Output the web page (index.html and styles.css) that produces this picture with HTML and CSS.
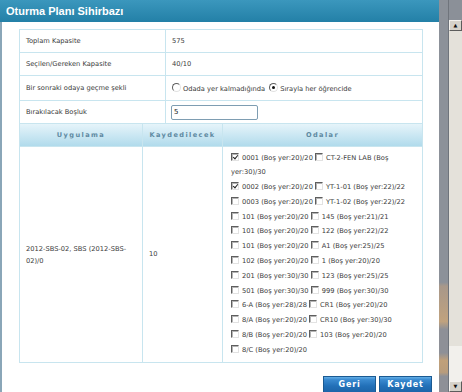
FILE: index.html
```html
<!DOCTYPE html>
<html lang="tr">
<head>
    <meta charset="UTF-8">
    <title>Oturma Planı Sihirbazı</title>
    <link rel="stylesheet" href="styles.css">
</head>
<body>
    <div class="screen">
        <div class="dialog">
            <div class="titlebar">Oturma Planı Sihirbazı</div>
            <div class="dialog-body">
                <table class="summary">
                    <colgroup><col class="label-col"><col></colgroup>
                    <tr class="row-23">
                        <td class="label">Toplam Kapasite</td>
                        <td class="value">575</td>
                    </tr>
                    <tr class="row-23">
                        <td class="label">Seçilen/Gereken Kapasite</td>
                        <td class="value">40/10</td>
                    </tr>
                    <tr class="row-25">
                        <td class="label">Bir sonraki odaya geçme şekli</td>
                        <td class="value">
                            <span class="radio"></span>Odada yer kalmadığında
                            <span class="radio checked"></span>Sırayla her öğrencide
                        </td>
                    </tr>
                    <tr class="row-23">
                        <td class="label">Bırakılacak Boşluk</td>
                        <td class="value"><input class="gap-input" type="text" value="5"></td>
                    </tr>
                </table>

                <table class="rooms">
                    <colgroup><col class="app-col"><col class="count-col"><col></colgroup>
                    <tr class="head">
                        <th>Uygulama</th>
                        <th>Kaydedilecek</th>
                        <th>Odalar</th>
                    </tr>
                    <tr>
                        <td class="app">2012-SBS-02, SBS (2012-SBS-<br>02)/0</td>
                        <td class="count">10</td>
                        <td class="room-list">
                            <span class="cb checked"></span>0001 (Boş yer:20)/20 <span class="cb"></span>CT-2-FEN LAB (Boş<br>yer:30)/30<br>
                            <span class="cb checked"></span>0002 (Boş yer:20)/20 <span class="cb"></span>YT-1-01 (Boş yer:22)/22<br>
                            <span class="cb"></span>0003 (Boş yer:20)/20 <span class="cb"></span>YT-1-02 (Boş yer:22)/22<br>
                            <span class="cb"></span>101 (Boş yer:20)/20 <span class="cb"></span>145 (Boş yer:21)/21<br>
                            <span class="cb"></span>101 (Boş yer:20)/20 <span class="cb"></span>122 (Boş yer:22)/22<br>
                            <span class="cb"></span>101 (Boş yer:20)/20 <span class="cb"></span>A1 (Boş yer:25)/25<br>
                            <span class="cb"></span>102 (Boş yer:20)/20 <span class="cb"></span>1 (Boş yer:20)/20<br>
                            <span class="cb"></span>201 (Boş yer:30)/30 <span class="cb"></span>123 (Boş yer:25)/25<br>
                            <span class="cb"></span>501 (Boş yer:30)/30 <span class="cb"></span>999 (Boş yer:30)/30<br>
                            <span class="cb"></span>6-A (Boş yer:28)/28 <span class="cb"></span>CR1 (Boş yer:20)/20<br>
                            <span class="cb"></span>8/A (Boş yer:20)/20 <span class="cb"></span>CR10 (Boş yer:30)/30<br>
                            <span class="cb"></span>8/B (Boş yer:20)/20 <span class="cb"></span>103 (Boş yer:20)/20<br>
                            <span class="cb"></span>8/C (Boş yer:20)/20
                        </td>
                    </tr>
                </table>

                <div class="actions">
                    <button class="btn">Geri</button>
                    <button class="btn">Kaydet</button>
                </div>
            </div>
        </div>
        <div class="strip"></div>
        <div class="scrollbar">
            <div class="sb-top"></div>
            <div class="sb-btn">&#9650;</div>
            <div class="sb-track"></div>
            <div class="sb-btn">&#9660;</div>
        </div>
    </div>
</body>
</html>
```
FILE: styles.css
```css
* {
    margin: 0;
    padding: 0;
    box-sizing: border-box;
}

body {
    font-family: 'DejaVu Sans', Verdana, sans-serif;
    font-size: 6.7px;
    color: #3a3a3a;
    background: #8b9098;
    height: 392px;
    overflow: hidden;
}

.screen {
    display: flex;
    height: 392px;
}

.dialog {
    width: 439px;
    display: flex;
    flex-direction: column;
    background: white;
}

.titlebar {
    height: 22px;
    line-height: 23px;
    padding-left: 6px;
    background: linear-gradient(#3b97bd, #2380a7);
    color: white;
    font-family: 'Liberation Sans', Arial, sans-serif;
    font-weight: bold;
    font-size: 11px;
}

.dialog-body {
    flex: 1;
    border-left: 2px solid #8aa6b8;
    padding: 7px 16px 0 17px;
}

table {
    width: 404px;
    border-collapse: collapse;
    table-layout: fixed;
}

td, th {
    border: 1px solid #c8e5ef;
}

.label-col {
    width: 146px;
}

.row-23 {
    height: 23px;
}

.row-25 {
    height: 25px;
}

.label {
    padding-left: 6px;
}

.value {
    padding-left: 6px;
}

.radio {
    display: inline-block;
    width: 9px;
    height: 9px;
    border-radius: 50%;
    border: 1px solid;
    border-color: #5e5e5e #e2e2e2 #e2e2e2 #5e5e5e;
    background: white;
    vertical-align: -1px;
    margin: 0 2px 0 0;
    position: relative;
}

.radio + .radio,
.radio.checked {
    margin-left: 2px;
}

.radio.checked::after {
    content: '';
    position: absolute;
    left: 2px;
    top: 2px;
    width: 3px;
    height: 3px;
    border-radius: 50%;
    background: #111;
}

.gap-input {
    width: 87px;
    height: 15px;
    margin-left: -1px;
    border: 1px solid #7e9db2;
    border-radius: 2px;
    padding-left: 2px;
    font-family: 'DejaVu Sans', Verdana, sans-serif;
    font-size: 7px;
    color: #222;
    vertical-align: middle;
}

.rooms tr:first-child th {
    border-top: none;
}

.app-col {
    width: 123px;
}

.count-col {
    width: 80px;
}

.head {
    height: 22px;
    background: linear-gradient(#e6f4fa, #b1dbec);
}

.head th {
    font-weight: bold;
    font-size: 6.6px;
    letter-spacing: 1.4px;
    color: #5f8aa2;
    text-align: center;
}

.app {
    padding: 2px 6px 0 6px;
    line-height: 12px;
}

.count {
    padding-left: 6px;
}

.room-list {
    padding: 4px 4px 4px 8px;
    line-height: 14.8px;
    vertical-align: top;
}

.cb {
    display: inline-block;
    width: 8px;
    height: 8px;
    border: 1px solid;
    border-color: #5e5e5e #e2e2e2 #e2e2e2 #5e5e5e;
    box-shadow: inset 1px 1px #b4b4b4;
    background: white;
    vertical-align: -1px;
    margin-right: 3px;
    position: relative;
}

.cb.checked::after {
    content: '';
    position: absolute;
    left: 1.5px;
    top: 0px;
    width: 2px;
    height: 4px;
    border: solid #222;
    border-width: 0 1.3px 1.3px 0;
    transform: rotate(40deg);
}

.actions {
    display: flex;
    justify-content: flex-end;
    gap: 3px;
    margin-top: 13px;
    margin-right: -9px;
}

.btn {
    width: 53px;
    height: 20px;
    border: 1px solid #1b5a92;
    background: linear-gradient(#63aee6 0, #3a8ad0 15%, #2270b8 50%, #1a5fa2 100%);
    color: white;
    font-family: 'DejaVu Sans', Verdana, sans-serif;
    font-weight: bold;
    font-size: 8px;
    letter-spacing: 0.8px;
    padding-bottom: 2px;
}

.strip {
    width: 10px;
    background: linear-gradient(#8c9199 0, #8c9199 72%, #a8988a 73%, #c0a27e 82%, #8e9097 84%, #8e9097 90%, #c0a07a 92%, #b89c7c 95%, #8e9097 96%);
    border-right: 1px solid #6f747c;
}

.scrollbar {
    width: 13px;
    display: flex;
    flex-direction: column;
    background: #dcd8d0;
}

.sb-top {
    height: 20px;
    background: #8b9098;
}

.sb-btn {
    height: 11px;
    border: 1px solid;
    border-color: #f4f2ee #5c5c5c #5c5c5c #f4f2ee;
    background: #d6d2ca;
    font-size: 5px;
    line-height: 9px;
    text-align: center;
    color: #111;
}

.sb-track {
    flex: 1;
    background: linear-gradient(#e4e1da, #e4e1da 90%, #f2f0ec 90%);
}
```
